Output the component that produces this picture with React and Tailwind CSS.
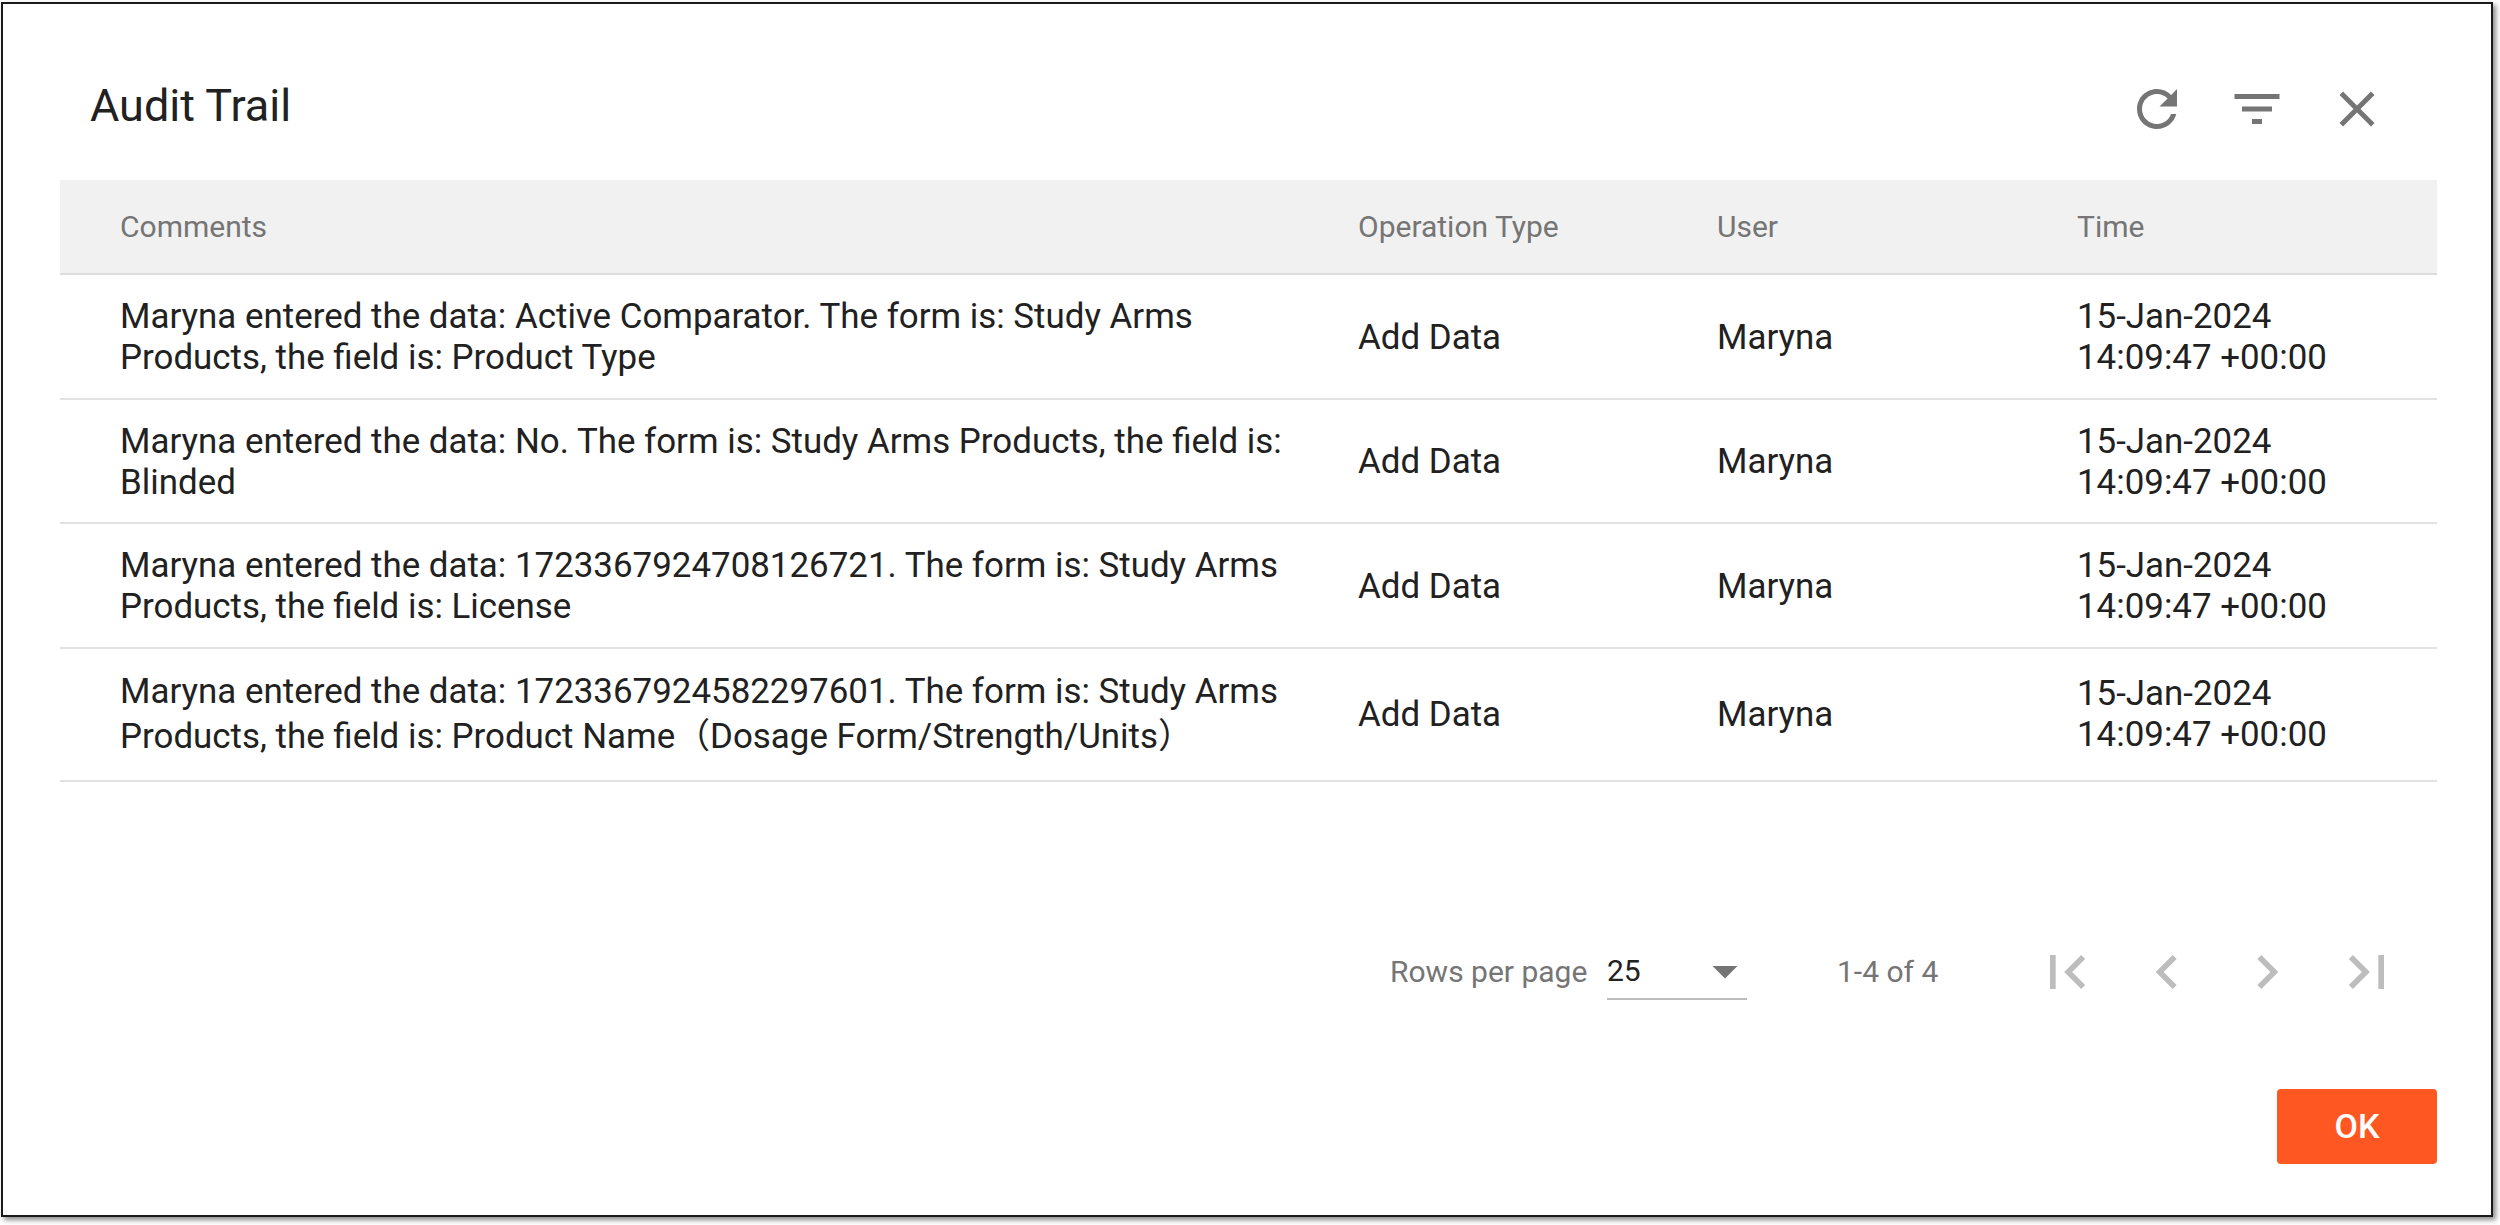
const ROWS = [
  { text: "Maryna entered the data: Active Comparator. The form is: Study Arms Products, the field is: Product Type", row: "min-h-[124.5px] pt-[2px]", cell: "" },
  { text: "Maryna entered the data: No. The form is: Study Arms Products, the field is: Blinded", row: "min-h-[124.5px] pt-[2px]", cell: "" },
  { text: "Maryna entered the data: 1723367924708126721. The form is: Study Arms Products, the field is: License", row: "min-h-[124.5px] pt-[2px]", cell: "" },
  { text: "Maryna entered the data: 1723367924582297601. The form is: Study Arms Products, the field is: Product Name（Dosage Form/Strength/Units）", row: "min-h-[133.5px]", cell: "leading-[45px]" },
];

function Icon({ d, className }) {
  return (
    <svg viewBox="0 0 24 24" fill="currentColor" className={className}>
      <path d={d} />
    </svg>
  );
}

const REFRESH = "M17.65 6.35C16.2 4.9 14.21 4 12 4c-4.42 0-7.99 3.58-7.99 8s3.57 8 7.99 8c3.73 0 6.84-2.55 7.73-6h-2.08c-.82 2.33-3.04 4-5.65 4-3.31 0-6-2.69-6-6s2.69-6 6-6c1.66 0 3.14.69 4.22 1.78L13 11h7V4l-2.35 2.35z";
const FILTER = "M10 18h4v-2h-4v2zM3 6v2h18V6H3zm3 7h12v-2H6v2z";
const CLOSE = "M19 6.41L17.59 5 12 10.59 6.41 5 5 6.41 10.59 12 5 17.59 6.41 19 12 13.41 17.59 19 19 17.59 13.41 12z";
const FIRST = "M18.41 16.59L13.82 12l4.59-4.59L17 6l-6 6 6 6zM6 6h2v12H6z";
const PREV = "M15.41 7.41L14 6l-6 6 6 6 1.41-1.41L10.83 12z";
const NEXT = "M10 6L8.59 7.41 13.17 12l-4.58 4.59L10 18l6-6z";
const LAST = "M5.59 7.41L10.18 12l-4.59 4.59L7 18l6-6-6-6zM16 6h2v12h-2z";
const ARROW = "M7 10l5 5 5-5z";

export default function App() {
  return (
    <div className="w-[2500px] h-[1225px] bg-white pl-[1px] pt-[2px] font-['Roboto','Noto_Sans_CJK_SC',sans-serif]">
      <div className="w-[2492px] h-[1215px] border-2 border-[#1a1a1a] bg-white shadow-[3px_3px_5px_rgba(0,0,0,0.45)] flex flex-col">
        <header className="flex items-center justify-between h-[176px] pt-[34px] pl-[87px] pr-[104px]">
          <h1 className="text-[45px] leading-[48px] font-normal text-[#212121] mb-[6px]">Audit Trail</h1>
          <div className="flex items-center text-[#757575]">
            <Icon d={REFRESH} className="w-[60px] h-[60px] mr-[40px]" />
            <Icon d={FILTER} className="w-[60px] h-[60px] mr-[40px]" />
            <Icon d={CLOSE} className="w-[60px] h-[60px]" />
          </div>
        </header>

        <div className="mx-[57px] w-[2377px]">
          <div className="grid grid-cols-[1298px_359px_360px_360px] h-[95px] items-center bg-[#f1f1f1] border-b-2 border-[#dcdcdc] text-[30px] text-[#757575]">
            <div className="pl-[60px]">Comments</div>
            <div>Operation Type</div>
            <div>User</div>
            <div>Time</div>
          </div>
          {ROWS.map((r, i) => (
            <div key={i} className={`grid grid-cols-[1298px_359px_360px_360px] items-center border-b-2 border-[#e2e2e2] text-[34.9px] leading-[41px] text-[#212121] ${r.row}`}>
              <div className={`pl-[60px] pr-[60px] ${r.cell}`}>{r.text}</div>
              <div>Add Data</div>
              <div>Maryna</div>
              <div>
                <div>15-Jan-2024</div>
                <div>14:09:47 +00:00</div>
              </div>
            </div>
          ))}
        </div>

        <div className="mt-[144.5px] h-[90px] flex items-center pl-[1387px]">
          <span className="text-[30px] text-[#757575] w-[217px]">Rows per page</span>
          <div className="w-[140px] h-[54px] flex items-center justify-between border-b-2 border-[#bdbdbd] mt-[3px]">
            <span className="text-[30px] text-[#212121] -mt-[3px]">25</span>
            <Icon d={ARROW} className="w-[60px] h-[60px] text-[#757575] -mt-[3px] -mr-[8px]" />
          </div>
          <span className="ml-[90px] w-[196px] text-[30px] text-[#757575]">1-4 of 4</span>
          <div className="flex items-center text-[#bdbdbd] gap-[32px]">
            <Icon d={FIRST} className="w-[68px] h-[68px]" />
            <Icon d={PREV} className="w-[68px] h-[68px]" />
            <Icon d={NEXT} className="w-[68px] h-[68px]" />
            <Icon d={LAST} className="w-[68px] h-[68px]" />
          </div>
        </div>

        <div className="flex justify-end pr-[54px] mt-[72px]">
          <button className="w-[160px] h-[75px] rounded-[4px] bg-[#ff5722] text-white text-[34px] font-medium">OK</button>
        </div>
      </div>
    </div>
  );
}
